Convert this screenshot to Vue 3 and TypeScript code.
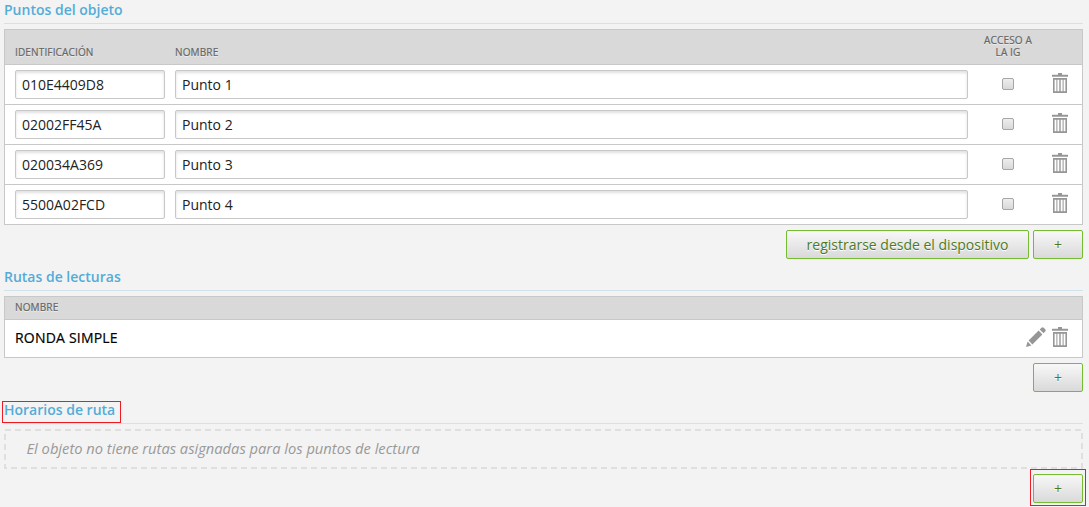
<template>
  <main class="page">
    <section class="section">
      <h2 class="section__title"><span>Puntos del objeto</span></h2>
      <div class="table">
        <div class="table__head table__head--points">
          <span class="col-id">Identificación</span>
          <span class="col-name">Nombre</span>
          <span class="col-access">Acceso a<br>la IG</span>
        </div>
        <div v-for="point in points" :key="point.id" class="table__row table__row--point">
          <input v-model="point.id" class="field col-id" type="text">
          <input v-model="point.name" class="field col-name" type="text">
          <span class="col-access">
            <input v-model="point.access" class="check" type="checkbox">
          </span>
          <svg class="trash" width="16" height="20" viewBox="0 0 16 20">
            <path :d="trashPath" fill="#969696" fill-rule="evenodd" />
          </svg>
        </div>
      </div>
      <div class="actions">
        <button class="btn btn--wide" type="button">registrarse desde el dispositivo</button>
        <button class="btn" type="button">+</button>
      </div>
    </section>

    <section class="section">
      <h2 class="section__title"><span>Rutas de lecturas</span></h2>
      <div class="table">
        <div class="table__head">Nombre</div>
        <div v-for="route in routes" :key="route" class="table__row table__row--route">
          <span class="route-name">{{ route }}</span>
          <svg class="pencil" width="20" height="20" viewBox="0 0 20 20">
            <path
              d="M0 20L1.6 14.6L5.4 18.4ZM2.6 13.6L12.6 3.6L16.4 7.4L6.4 17.4ZM13.7 2.5L15.5 0.7Q16.8 -0.2 18 1L19.2 2.2Q20.2 3.4 19.2 4.6L17.5 6.3Z"
              fill="#969696"
            />
          </svg>
          <svg class="trash" width="16" height="20" viewBox="0 0 16 20">
            <path :d="trashPath" fill="#969696" fill-rule="evenodd" />
          </svg>
        </div>
      </div>
      <div class="actions">
        <button class="btn" type="button">+</button>
      </div>
    </section>

    <section class="section">
      <h2 class="section__title section__title--marked"><span>Horarios de ruta</span></h2>
      <div class="empty">
        <svg class="empty__frame" width="1079" height="40">
          <rect x="1" y="1" width="1077" height="38" />
        </svg>
        <span>El objeto no tiene rutas asignadas para los puntos de lectura</span>
      </div>
      <div class="actions">
        <button class="btn btn--marked" type="button">+</button>
      </div>
    </section>
  </main>
</template>

<script setup lang="ts">
import { ref } from 'vue'

interface Point {
  id: string
  name: string
  access: boolean
}

const points = ref<Point[]>([
  { id: '010E4409D8', name: 'Punto 1', access: false },
  { id: '02002FF45A', name: 'Punto 2', access: false },
  { id: '020034A369', name: 'Punto 3', access: false },
  { id: '5500A02FCD', name: 'Punto 4', access: false },
])

const routes = ref<string[]>(['RONDA SIMPLE'])

// lid, then the can with four slots cut out
const trashPath =
  'M6 0H10V1.7H16V3.8H0V1.7H6ZM1 5H15V20H1ZM2.6 6.8V18.3H4.4V6.8ZM5.4 6.8V18.3H7.3V6.8ZM8.7 6.8V18.3H10.6V6.8ZM11.6 6.8V18.3H13.4V6.8Z'
</script>

<style>
body {
  background: #f3f3f3;
}
</style>

<style scoped>
.page {
  box-sizing: border-box;
  height: 507px;
  padding: 0 6px 0 4px;
  overflow: hidden;
  font-family: 'Open Sans', 'Noto Sans', sans-serif;
  font-size: 14px;
  color: #222;
  background: #f3f3f3;
}

.section {
  margin-bottom: 8px;
}

.section__title {
  box-sizing: border-box;
  height: 24px;
  margin: 0 0 5px;
  border-bottom: 1px solid #d0e3ec;
  font-size: 14px;
  font-weight: 600;
  line-height: 20px;
  color: #53acd8;
}

.section__title span {
  position: relative;
}

.section__title--marked span::after {
  content: '';
  position: absolute;
  top: 1px;
  left: -2px;
  box-sizing: border-box;
  width: 119px;
  height: 22px;
  border: 1px solid #ed1c24;
}

.table {
  border: 1px solid #c8c8c8;
  border-bottom: 0;
  background: #fff;
}

.table__head {
  display: flex;
  box-sizing: border-box;
  height: 23px;
  padding: 0 10px;
  border-bottom: 1px solid #c8c8c8;
  background: #d9d9d9;
  font-size: 10px;
  font-weight: 500;
  letter-spacing: 0.15px;
  line-height: 21px;
  color: #666;
  text-transform: uppercase;
  text-shadow: 0 1px 0 #eee;
  -webkit-text-stroke: 0.2px #666;
}

.table__head--points {
  align-items: flex-end;
  gap: 10px;
  height: 35px;
  padding-bottom: 6px;
  line-height: 12px;
}

.table__row {
  display: flex;
  align-items: center;
  box-sizing: border-box;
  padding: 0 14px 0 10px;
  border-bottom: 1px solid #c8c8c8;
}

.table__row--point {
  gap: 10px;
  height: 40px;
}

.table__row--route {
  height: 38px;
}

.col-id {
  flex: none;
  width: 150px;
}

.col-name {
  flex: none;
  width: 793px;
}

.col-access {
  display: flex;
  flex: none;
  justify-content: center;
  width: 60px;
  text-align: center;
}

.field {
  box-sizing: border-box;
  height: 29px;
  padding: 0 6px;
  border: 1px solid #c8c8c8;
  border-radius: 2px;
  outline: 0;
  background: #fff;
  box-shadow: inset 0 2px 3px rgba(0, 0, 0, 0.12);
  font: inherit;
  color: #222;
}

.check {
  appearance: none;
  box-sizing: border-box;
  width: 12px;
  height: 12px;
  margin: 0 0 2px;
  border: 1px solid #a5a5a5;
  border-radius: 2px;
  background: linear-gradient(#eee, #d9d9d9);
}

.trash {
  flex: none;
  margin: 0 0 4px auto;
}

.route-name {
  flex: 1;
  margin-bottom: 2px;
  color: #000;
  font-weight: 500;
  letter-spacing: 0.2px;
  -webkit-text-stroke: 0.2px #000;
}

.pencil {
  margin: 0 6px 4px 0;
}

.actions {
  display: flex;
  justify-content: flex-end;
  gap: 4px;
  margin-top: 5px;
}

.btn {
  position: relative;
  box-sizing: border-box;
  width: 50px;
  height: 29px;
  padding: 0;
  border: 1px solid #7b3;
  border-radius: 2px;
  background: linear-gradient(#f8f8f8, #d9d9d9);
  font: inherit;
  line-height: 27px;
  color: #4c7a1f;
  text-shadow: 0 1px 0 #fff;
}

.btn--wide {
  width: 243px;
}

.btn--marked::after {
  content: '';
  position: absolute;
  inset: -6px -4px -4px;
  border: 1px solid #ed1c24;
}

.empty {
  position: relative;
  box-sizing: border-box;
  height: 40px;
  padding-left: 22.5px;
  font-size: 14.7px;
  font-style: italic;
  line-height: 38px;
  color: #999;
}

.empty__frame {
  position: absolute;
  top: 0;
  left: 0;
}

.empty__frame rect {
  fill: none;
  stroke: #dfdfdf;
  stroke-width: 2;
  stroke-dasharray: 6 4;
}
</style>
